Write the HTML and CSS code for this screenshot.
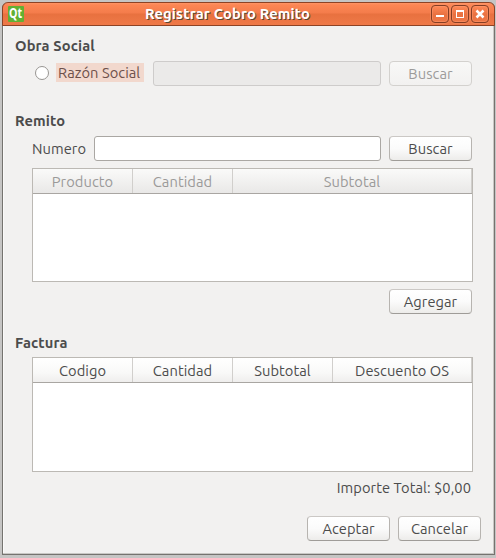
FILE: index.html
```html
<!DOCTYPE html>
<html lang="es">
<head>
<meta charset="utf-8">
<title>Registrar Cobro Remito</title>
<link rel="stylesheet" href="styles.css">
</head>
<body>
<div class="window">
  <header class="titlebar">
    <span class="logo"><span>Qt</span></span>
    <h1>Registrar Cobro Remito</h1>
    <div class="controls">
      <span class="control"><svg viewBox="0 0 18 18"><path d="M5 10h8v2H5z" fill="#fff"/></svg></span>
      <span class="control"><svg viewBox="0 0 18 18"><path d="M5 5h8v8H5zM6 7v5h6V7z" fill="#fff" fill-rule="evenodd"/></svg></span>
      <span class="control"><svg viewBox="0 0 18 18"><path d="M5.5 5.5l7 7M12.5 5.5l-7 7" stroke="#fff" stroke-width="2.5"/></svg></span>
    </div>
  </header>
  <main class="content">
    <section class="social">
      <h2>Obra Social</h2>
      <div class="row">
        <span class="radio"></span>
        <label class="highlight">Razón Social</label>
        <div class="field disabled"></div>
        <button class="disabled" disabled>Buscar</button>
      </div>
    </section>
    <section class="remito">
      <h2>Remito</h2>
      <div class="row">
        <label class="number">Numero</label>
        <div class="field"></div>
        <button>Buscar</button>
      </div>
      <div class="table three muted">
        <div class="head"><span>Producto</span><span>Cantidad</span><span>Subtotal</span></div>
      </div>
      <div class="row actions"><button>Agregar</button></div>
    </section>
    <section class="factura">
      <h2>Factura</h2>
      <div class="table four">
        <div class="head"><span>Codigo</span><span>Cantidad</span><span>Subtotal</span><span>Descuento OS</span></div>
      </div>
      <p class="total">Importe Total: $0,00</p>
    </section>
    <footer><button>Aceptar</button><button>Cancelar</button></footer>
  </main>
</div>
</body>
</html>
```
FILE: styles.css
```css
* { box-sizing: border-box; }
body {
  margin: 0;
  padding: 2px 1px 3px 2px;
  height: 558px;
  overflow: hidden;
  background: #c6c5c4;
  color: #4c4c4c;
  font: 14.667px/20px "Ubuntu", "Noto Sans", sans-serif;
  letter-spacing: .06px;
}
.window {
  height: 553px;
  background: #f2f1f0;
  border: 1px solid #75736f;
  border-top: 0;
  border-radius: 6px 6px 0 0;
  box-shadow: inset -1px -1px #c9c7c4, inset 1px 0 #fbfaf9;
}
.titlebar {
  display: flex;
  align-items: center;
  height: 24px;
  margin: 0 -1px;
  padding: 0 5px 0 5px;
  border: 1px solid #8d4325;
  border-radius: 6px 6px 0 0;
  background: linear-gradient(#ff9565 0, #fc8654 2px, #f47c4b 10px, #e8713f 11px, #ef7948 100%);
}
.logo {
  display: flex;
  align-items: center;
  justify-content: center;
  width: 16px;
  height: 16px;
  border-radius: 1px;
  background: #62b033;
  color: #fff;
  font: bold 14px/14px "Open Sans", sans-serif;
}
.logo span { transform: translateY(-1px) scaleX(.76); }
h1 {
  flex: 1;
  margin: 0;
  text-align: center;
  color: #fff;
  font-size: 14.667px;
  line-height: 20px;
  letter-spacing: .16px;
  text-shadow: 1px 1px #5c4634;
}
.controls { display: flex; gap: 2px; }
.control {
  width: 18px;
  height: 18px;
  border: 1px solid #843e24;
  border-radius: 4px;
  background: linear-gradient(#ff8957, #e97140 55%, #ef7847);
  box-shadow: 0 0 0 1px #fa966d66, inset 0 0 0 1px #ff9a7077;
}
.control svg { display: block; width: 18px; height: 18px; margin: -1px; }
.content { padding: 10px 22px 0 12px; }
h2 { margin: 0; font-size: 14.667px; line-height: 20px; letter-spacing: .12px; }
.row { display: flex; align-items: center; gap: 8px; height: 25px; margin-left: 17px; }
.social .row { margin-top: 5px; margin-left: 20px; gap: 0; }
.radio {
  width: 14px;
  height: 14px;
  margin: 0 7px 1px 0;
  border: 1px solid #989592;
  border-radius: 50%;
  background: #fff;
}
.highlight {
  width: 88px;
  height: 19px;
  margin: 0 9px 2px 0;
  padding-left: 2px;
  background: #f2d8cd;
  color: #6d504a;
  line-height: 19px;
  white-space: nowrap;
}
.number { width: 54px; }
.field {
  flex: 1;
  height: 25px;
  border: 1px solid #aaa7a3;
  border-radius: 3px;
  background: #fff;
}
.field.disabled { margin-right: 8px; border-color: #cecccb; background: #ebeae9; }
button {
  width: 83px;
  height: 25px;
  padding: 0;
  border: 1px solid #b7b4b0;
  border-top-color: #cbc8c5;
  border-bottom-color: #9f9c98;
  border-radius: 4px;
  background: linear-gradient(#fff, #fbfbfb 50%, #edecea);
  color: #4c4c4c;
  font: inherit;
  letter-spacing: inherit;
}
button.disabled { border-color: #d3d1ce; background: linear-gradient(#f8f8f7, #f2f1f0); color: #9c9b9a; }
.remito { margin-top: 25px; }
.remito > .row { margin-top: 5px; }
.table {
  height: 115px;
  width: 441px;
  margin: 7px 0 0 17px;
  border: 1px solid #bcb9b4;
  background: #fff;
}
.remito .table { height: 114px; }
.head {
  display: grid;
  height: 25px;
  border-bottom: 1px solid #a9a6a2;
  background: linear-gradient(#fff, #f9f9f8 60%, #efeeed);
  line-height: 25px;
  text-align: center;
}
.three .head { grid-template-columns: 100px 100px 1fr; }
.four .head { grid-template-columns: 100px 100px 100px 1fr; }
.head span { height: 24px; border-right: 1px solid #d1cfcc; }
.muted .head { background: linear-gradient(#fafaf9, #e9e8e7); color: #9b9a99; }
.remito > .actions { justify-content: flex-end; margin-top: 7px; }
.factura { margin-top: 19px; }
.factura .table { margin-top: 4px; }
.total { margin: 6px 1px 0 0; text-align: right; }
footer { display: flex; gap: 8px; justify-content: flex-end; margin: 18px -9px 0 0; }
```
